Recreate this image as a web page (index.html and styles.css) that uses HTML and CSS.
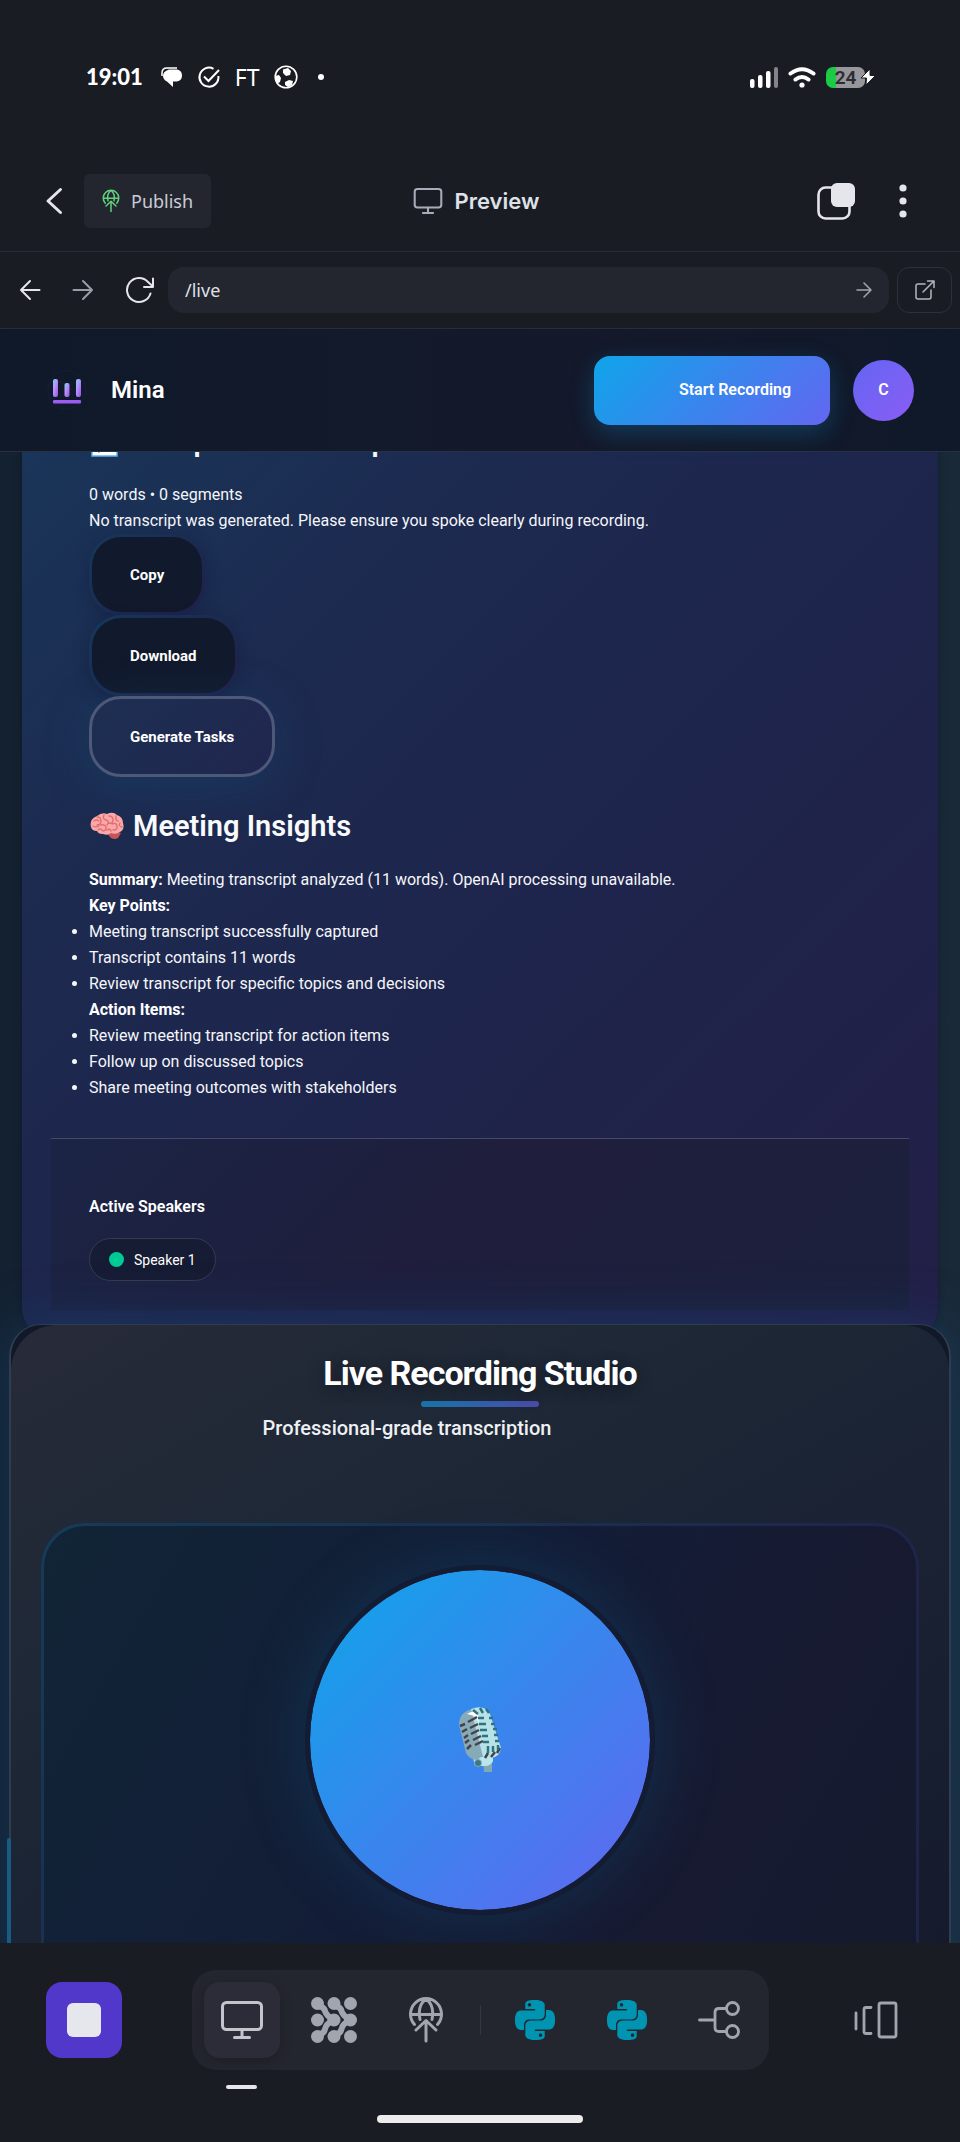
FILE: index.html
```html
<!DOCTYPE html>
<html lang="en">
<head>
<meta charset="utf-8">
<meta name="viewport" content="width=device-width, initial-scale=1">
<title>Mina – Preview</title>
<link rel="stylesheet" href="styles.css">
</head>
<body>
<svg class="defs" aria-hidden="true">
  <defs>
    <symbol id="python" viewBox="0 0 24 24"><path fill="currentColor" d="M14.25.18l.9.2.73.26.59.3.45.32.34.34.25.34.16.33.1.3.04.26.02.2-.01.13V8.5l-.05.63-.13.55-.21.46-.26.38-.3.31-.33.25-.35.19-.35.14-.33.1-.3.07-.26.04-.21.02H8.77l-.69.05-.59.14-.5.22-.41.27-.33.32-.27.35-.2.36-.15.37-.1.35-.07.32-.04.27-.02.21v3.06H3.17l-.21-.03-.28-.07-.32-.12-.35-.18-.36-.26-.36-.36-.35-.46-.32-.59-.28-.73-.21-.88-.14-1.05-.05-1.23.06-1.22.16-1.04.24-.87.32-.71.36-.57.4-.44.42-.33.42-.24.4-.16.36-.1.32-.05.24-.01h.16l.06.01h8.16v-.83H6.18l-.01-2.75-.02-.37.05-.34.11-.31.17-.28.25-.26.31-.23.38-.2.44-.18.51-.15.58-.12.64-.1.71-.06.77-.04.84-.02 1.27.05zm-6.3 1.98l-.23.33-.08.41.08.41.23.34.33.22.41.09.41-.09.33-.22.23-.34.08-.41-.08-.41-.23-.33-.33-.22-.41-.09-.41.09zm13.09 3.95l.28.06.32.12.35.18.36.27.36.35.35.47.32.59.28.73.21.88.14 1.04.05 1.23-.06 1.23-.16 1.04-.24.86-.32.71-.36.57-.4.45-.42.33-.42.24-.4.16-.36.09-.32.05-.24.02-.16-.01h-8.22v.82h5.84l.01 2.76.02.36-.05.34-.11.31-.17.29-.25.25-.31.24-.38.2-.44.17-.51.15-.58.13-.64.09-.71.07-.77.04-.84.01-1.27-.04-1.07-.14-.9-.2-.73-.25-.59-.3-.45-.33-.34-.34-.25-.34-.16-.33-.1-.3-.04-.25-.02-.2.01-.13v-5.34l.05-.64.13-.54.21-.46.26-.38.3-.32.33-.24.35-.2.35-.14.33-.1.3-.06.26-.04.21-.02.13-.01h5.84l.69-.05.59-.14.5-.21.41-.28.33-.32.27-.35.2-.36.15-.36.1-.35.07-.32.04-.28.02-.21V6.07h2.09l.14.01zm-6.47 14.25l-.23.33-.08.41.08.41.23.33.33.23.41.08.41-.08.33-.23.23-.33.08-.41-.08-.41-.23-.33-.33-.23-.41-.08-.41.08z"/></symbol>
    <symbol id="monitor" viewBox="0 0 44 40"><g fill="none" stroke="currentColor" stroke-width="3" stroke-linecap="round"><rect x="2.5" y="2.5" width="39" height="27" rx="4"/><path d="M22 30v7M14.500 37.500h15"/></g></symbol>
    <symbol id="globe" viewBox="0 0 36 46"><g fill="none" stroke="currentColor" stroke-width="3" stroke-linecap="round" stroke-linejoin="round"><path d="M6.500 27.500A15.500 15.500 0 1 1 29.500 27.500M2.500 17.500h31M12 22.500C10 13 12.500 6 18 2c5.500 4 8 11 6 20.500M18 44V23.500M8 33l10-9.500L28 33"/></g></symbol>
    <linearGradient id="bar" x1="0" y1="0" x2="1" y2="1"><stop offset="0" stop-color="#67d8fa"/><stop offset=".4" stop-color="#b794f9"/><stop offset="1" stop-color="#9d4ff0"/></linearGradient>
  </defs>
</svg>

<div class="status">
  <div class="status-group">
    <span class="clock">19:01</span>
    <svg width="22" height="22" viewBox="0 0 22 22"><path d="M1 10V7Q1 2 6 2h10" fill="none" stroke="#fff" stroke-width="1.500"/><path fill="#fff" d="M8 3.500h8q5 1 5 6t-5 6h-4v5.500l-6-5.500q-4-2-4-6t6-6z"/></svg>
    <svg width="24" height="24" viewBox="0 0 24 24" fill="none" stroke="#fff" stroke-width="2"><path d="M16.500 3.800A9.500 9.500 0 1 0 21.400 11M7 11.500l4.500 4.500L22 5"/></svg>
    <span class="ft">FT</span>
    <svg width="24" height="24" viewBox="0 0 24 24"><circle cx="12" cy="12" r="10.800" fill="none" stroke="#fff" stroke-width="1.600"/><path fill="#fff" d="M9 4.500l5-1.500 3 3-1 4-4 1-3-3zM1 11l4-1 2 3-1 4-3 2zM11 17l4-2 4 1-1 4-4 2-3-2z"/></svg>
    <span class="dot"></span>
  </div>
  <div class="status-group status-right">
    <svg width="28" height="21" viewBox="0 0 28 21" fill="#fff"><rect y="12" width="4.500" height="9" rx="2"/><rect x="8" y="8" width="4.500" height="13" rx="2"/><rect x="16" y="4" width="4.500" height="17" rx="2"/><rect x="24" y="0" width="4" height="21" rx="2" fill="#83848a"/></svg>
    <svg width="28" height="21" viewBox="0 0 28 21" fill="none" stroke="#fff" stroke-width="4" stroke-linecap="round"><path d="M2.500 6.500Q14-2 25.500 6.500M7.500 12.500q6.500-5 13 0"/><circle cx="14" cy="18" r="2.600" fill="#fff" stroke="none"/></svg>
    <span class="battery"><b>24</b></span>
    <svg class="bolt" width="15" height="16" viewBox="0 0 15 16"><path fill="#fff" stroke="#1a1c24" stroke-width="1" d="M9 0L0 9h5.500L5 16l9.500-9.500H9z"/></svg>
  </div>
</div>

<header class="toolbar">
  <div class="tool-side">
    <button class="plain" aria-label="Back"><svg width="18" height="28" viewBox="0 0 18 28" fill="none" stroke="#e4e6ec" stroke-width="3" stroke-linecap="round" stroke-linejoin="round"><path d="M15.500 2.500L3 14l12.500 11.500"/></svg></button>
    <button class="publish"><svg width="18" height="24"><use href="#globe"/></svg>Publish</button>
  </div>
  <h1 class="tool-title"><svg width="30" height="28"><use href="#monitor"/></svg>Preview</h1>
  <div class="tool-side tool-right">
    <button class="plain" aria-label="Tabs"><svg width="40" height="40" viewBox="0 0 40 40"><rect x="2.500" y="6.500" width="31" height="31" rx="7" fill="none" stroke="#e4e6ec" stroke-width="2.600"/><rect x="15" y="2" width="24" height="24" rx="6" fill="#e4e6ec"/></svg></button>
    <button class="plain" aria-label="More"><svg width="8" height="34" viewBox="0 0 8 34" fill="#e4e6ec"><circle cx="4" cy="4" r="3.600"/><circle cx="4" cy="17" r="3.600"/><circle cx="4" cy="30" r="3.600"/></svg></button>
  </div>
</header>

<nav class="address" aria-label="Browser">
  <button class="plain" aria-label="Previous page"><svg width="22" height="22" viewBox="0 0 22 22" fill="none" stroke="#e4e6ec" stroke-width="2" stroke-linecap="round" stroke-linejoin="round"><path d="M20.500 11H2M11 2l-9 9 9 9"/></svg></button>
  <button class="plain" aria-label="Next page"><svg width="22" height="22" viewBox="0 0 22 22" fill="none" stroke="#9a9da8" stroke-width="2" stroke-linecap="round" stroke-linejoin="round"><path d="M1.500 11H20M11 2l9 9-9 9"/></svg></button>
  <button class="plain" aria-label="Reload"><svg width="30" height="28" viewBox="0 0 30 28" fill="none" stroke="#e4e6ec" stroke-width="2" stroke-linecap="round" stroke-linejoin="round"><path d="M25.500 17.500A12 12 0 1 1 23 6l5 4.500M28 2.500v8.500h-9"/></svg></button>
  <div class="url"><input type="text" value="/live" aria-label="Path"><button class="plain" aria-label="Go"><svg width="16" height="16" viewBox="0 0 16 16" fill="none" stroke="#a2a5af" stroke-width="1.500" stroke-linecap="round" stroke-linejoin="round"><path d="M1 8h14M8 1l7 7-7 7"/></svg></button></div>
  <button class="external" aria-label="Open in new tab"><svg width="20" height="20" viewBox="0 0 20 20" fill="none" stroke="#b3b6c0" stroke-width="1.500" stroke-linecap="round" stroke-linejoin="round"><path d="M10 4H3Q1 4 1 6v11q0 2 2 2h11q2 0 2-2v-7M8 12L19 1M12.500 1H19v6.500"/></svg></button>
</nav>

<div class="app">
  <header class="app-header">
    <svg class="logo" width="42" height="42" viewBox="0 0 42 42"><g fill="none" stroke="#171e38"><circle cx="21" cy="21" r="19"/><path d="M0 17q10-10 21 0t21 8"/></g><g fill="url(#bar)"><rect x="7" y="10" width="5" height="18" rx="2"/><rect x="18.500" y="14" width="5" height="14" rx="2"/><rect x="30" y="10" width="5" height="18" rx="2"/></g><rect x="7" y="31" width="28" height="3.500" rx="1" fill="#9a5cf3"/></svg>
    <span class="brand">Mina</span>
    <button class="start">Start Recording</button>
    <button class="avatar" aria-label="Account">C</button>
  </header>

  <main class="content">
    <section class="results">
      <div class="report">
        <h2><svg width="36" height="32" viewBox="0 0 36 32"><rect x="3" y="1" width="25" height="30" fill="#fff" stroke="#5db4ee" stroke-width="1.500"/><path d="M9 27l8-3" stroke="#555" stroke-width="1.500"/></svg>Complete Transcript</h2>
        <p>0 words • 0 segments</p>
        <p>No transcript was generated. Please ensure you spoke clearly during recording.</p>
        <div class="actions">
          <button class="action">Copy</button>
          <button class="action">Download</button>
          <button class="action primary">Generate Tasks</button>
        </div>
        <h2><svg width="36" height="28" viewBox="0 0 36 28" role="img" aria-label="Brain"><path fill="#c95455" d="M17 20l8-1 7 2-3 5q-3 2-7 0z"/><path fill="#f9a9a9" d="M2 15Q0 7 8 4q5-4 10-2 6-3 10 1 6 2 6 8 2 7-3 9-4 3-9 1-3 3-8 1-5 0-6-3-5 0-6-4z"/><path fill="none" stroke="#e46d72" stroke-width="1.400" stroke-linecap="round" d="M5 9q3-2 5 0M8 5q4 0 4 4t-4 4M4 14q3 2 6 0M15 3q-2 4 2 5t1 5M12 13q4-1 5 2t-3 4M20 4q4 0 4 4t-4 3M27 4q-1 4 2 5M23 12q4-2 5 2t-4 4M31 11q-2 3 2 4M9 18q2-2 4 0M18 18q3-2 4 1"/></svg>Meeting Insights</h2>
        <p><strong>Summary:</strong> Meeting transcript analyzed (11 words). OpenAI processing unavailable.</p>
        <p><strong>Key Points:</strong></p>
        <ul>
          <li>Meeting transcript successfully captured</li>
          <li>Transcript contains 11 words</li>
          <li>Review transcript for specific topics and decisions</li>
        </ul>
        <p><strong>Action Items:</strong></p>
        <ul>
          <li>Review meeting transcript for action items</li>
          <li>Follow up on discussed topics</li>
          <li>Share meeting outcomes with stakeholders</li>
        </ul>
      </div>
      <div class="speakers">
        <h3>Active Speakers</h3>
        <span class="chip"><i></i>Speaker 1</span>
      </div>
    </section>

    <section class="studio">
      <div class="studio-body">
        <h2 class="studio-title">Live Recording Studio</h2>
        <p class="studio-sub">Professional-grade transcription</p>
        <div class="recorder">
          <button class="mic" aria-label="Record">
            <svg width="44" height="66" viewBox="0 0 44 66"><path fill="#82a7b5" d="M25 56h9v9h-8z"/><path fill="#b9e6ea" d="M15 51l20-3v6q-2 5-8 5H17z"/><path fill="#87aab9" d="M1 18Q1 5 14 2L25 5l2 42-8 6q-7 0-11-7z"/><path fill="#b7e2e8" d="M13 2q14-5 19 5l11 34q-1 9-10 10l-8-1z"/><path fill="#fff" d="M9 7q8-5 11 1l1 8-4-7z"/><circle cx="20" cy="56" r="3.500" fill="#3a7884" stroke="#87aab9"/><g fill="none" stroke="#454349" stroke-width="2.500"><path d="M10 15l9-5M12 21l8-4M13 27l8-4M15 33l8-4M17 38l8-4M2 19l5-2M4 25l5-3M6 31l4-3M7 36l4-3M9 42l4-4M27 51l3-5M33 50l4-5M39 46l3-5"/></g><g fill="none" stroke="#2e737d" stroke-width="2.500"><path d="M15 3l5 4M22 1l3 5M28 2l3 4M20 11h6M31 11h4M21 17h7M33 17h4M22 23h7M35 22h4M24 29h6M36 28h4M25 35h6M37 34h4M30 39v7M35 39v6M40 38v5"/></g></svg>
          </button>
        </div>
      </div>
    </section>
    <span class="scroll-mark"></span>
  </main>
</div>

<footer class="dock">
  <nav class="dock-row" aria-label="Tools">
    <button class="stop" aria-label="Stop"></button>
    <div class="tabs">
      <button class="tab active" aria-label="Preview"><svg width="44" height="40"><use href="#monitor"/></svg></button>
      <button class="tab" aria-label="Agent"><svg width="46" height="46" viewBox="0 0 46 46" fill="currentColor"><g><circle cx="6.500" cy="6.500" r="6.500"/><circle cx="23" cy="6.500" r="6.500"/><circle cx="39.500" cy="6.500" r="6.500"/><circle cx="6.500" cy="23" r="6.500"/><circle cx="23" cy="23" r="6.500"/><circle cx="39.500" cy="23" r="6.500"/><circle cx="6.500" cy="39.500" r="6.500"/><circle cx="23" cy="39.500" r="6.500"/><circle cx="39.500" cy="39.500" r="6.500"/></g><path fill="none" stroke="currentColor" stroke-width="6" d="M8 9q5 1 6 5t8 9q-7 4-8 9t-6 5M24.500 9q5 1 6 5t8 9q-7 4-8 9t-6 5"/></svg></button>
      <button class="tab" aria-label="Publish"><svg width="36" height="46"><use href="#globe"/></svg></button>
      <span class="divider"></span>
      <button class="tab py" aria-label="Python file"><svg width="40" height="40"><use href="#python"/></svg></button>
      <button class="tab py" aria-label="Python file"><svg width="40" height="40"><use href="#python"/></svg></button>
      <button class="tab" aria-label="Version control"><svg width="42" height="40" viewBox="0 0 42 40" fill="none" stroke="currentColor" stroke-width="2.800" stroke-linecap="round"><path d="M1.500 20H17M28 8.500h-7q-4 0-4 4v15q0 4 4 4h7"/><circle cx="34.500" cy="8.500" r="6"/><circle cx="34.500" cy="31.500" r="6"/></svg></button>
    </div>
    <button class="tab" aria-label="Switcher"><svg width="44" height="38" viewBox="0 0 44 38" fill="none" stroke="currentColor" stroke-width="2.800" stroke-linecap="round"><path d="M2 12v16M17 6.500h-5q-2 0-2 2v22q0 2 2 2h5"/><rect x="25" y="2" width="17" height="34" rx="2"/></svg></button>
  </nav>
  <div class="home"></div>
</footer>
</body>
</html>
```
FILE: styles.css
```css
* { box-sizing: border-box; }
body {
  margin: 0;
  height: 100vh;
  display: flex;
  flex-direction: column;
  background: #1a1c24;
  color: #fff;
  font-family: Roboto, "Liberation Sans", sans-serif;
  font-size: 16px;
  line-height: 26px;
}
h1, h2, h3, p, ul { margin: 0; padding: 0; }
button { font: inherit; color: inherit; border: 0; cursor: pointer; }
svg { display: block; flex: none; }
.defs { position: absolute; width: 0; height: 0; }
.plain { background: none; padding: 0; }

/* Phone status bar */
.status {
  display: flex;
  justify-content: space-between;
  align-items: center;
  padding: 64px 86px 0;
  height: 90px;
  flex: none;
}
.status-group { display: flex; align-items: center; gap: 14px; }
.status-right { gap: 10px; }
.clock { margin-right: 4px; font-family: Lato, sans-serif; font-weight: 900; font-size: 22px; }
.ft { font-family: "Noto Sans", sans-serif; font-size: 23px; font-weight: 400; }
.dot { width: 6px; height: 6px; border-radius: 50%; background: #fff; margin-left: 6px; }
.battery {
  width: 39px;
  height: 21px;
  border-radius: 7px;
  background: linear-gradient(90deg, #1ccb45 26%, #97979b 26%);
  color: #2c2c30;
  text-align: center;
  font-size: 19px;
  line-height: 21px;
}
.battery b { font-weight: 600; }
.bolt { margin-left: -14px; }
.status-right { margin-right: -2px; }

/* Workspace toolbar */
.toolbar {
  display: flex;
  align-items: center;
  justify-content: space-between;
  height: 162px;
  padding: 60px 53px 0 45px;
  border-bottom: 1px solid #2a2c37;
  flex: none;
}
.tool-side { display: flex; align-items: center; gap: 21px; flex: 1; }
.tool-right { justify-content: flex-end; gap: 43px; }
.publish {
  display: flex;
  align-items: center;
  gap: 11px;
  height: 54px;
  padding: 0 18px;
  border-radius: 6px;
  background: #24262f;
  color: #c9ccd6;
  font-family: "Noto Sans", sans-serif;
  font-size: 18px;
}
.publish svg { color: #62d17c; }
.tool-title {
  display: flex;
  align-items: center;
  gap: 12px;
  color: #dfe1e8;
  font-family: Inter, sans-serif;
  font-size: 22px;
  font-weight: 600;
}
.tool-title svg { color: #a9acb8; }

/* Address row */
.address {
  display: flex;
  align-items: center;
  height: 77px;
  padding: 0 8px 0 19px;
  border-bottom: 1px solid #2a2c37;
  flex: none;
  gap: 31px;
}
.url {
  display: flex;
  align-items: center;
  flex: 1;
  height: 46px;
  margin-left: -18px;
  padding: 0 17px;
  border-radius: 16px;
  background: #24262f;
}
.url input {
  flex: 1;
  min-width: 0;
  padding: 0;
  border: 0;
  outline: 0;
  background: none;
  color: #dfe1e8;
  font-family: "Noto Sans", sans-serif;
  font-size: 18px;
}
.external {
  display: grid;
  place-items: center;
  width: 55px;
  height: 46px;
  margin-left: -23px;
  border: 1px solid #2d303d;
  border-radius: 12px;
  background: none;
}

/* Previewed app */
.app {
  flex: 1;
  min-height: 0;
  overflow: hidden;
  background: linear-gradient(90deg, #142131 0, #172638 50%, #1a2938 100%);
}
.app-header {
  position: relative;
  z-index: 2;
  display: flex;
  align-items: center;
  height: 123px;
  padding: 0 46px;
  border-bottom: 1px solid #263243;
  background: linear-gradient(90deg, #0f1929, #131a2b 40%, #14182b 70%, #0f1929);
}
.brand { margin-left: 23px; flex: 1; font-size: 24px; font-weight: 600; }
.start {
  height: 69px;
  padding: 0 38px 0 84px;
  min-width: 236px;
  border-radius: 16px;
  background: linear-gradient(135deg, #0ea5e9, #6366f1);
  box-shadow: 0 8px 24px rgba(14, 165, 233, 0.25);
  font-weight: 600;
}
.avatar {
  width: 61px;
  height: 61px;
  margin-left: 23px;
  border-radius: 50%;
  background: linear-gradient(135deg, #6366f1, #8b5cf6);
  font-weight: 600;
}

.content { position: relative; margin-top: -96px; }
.results {
  margin: 0 22px;
  padding: 29px;
  border-radius: 32px;
  background: linear-gradient(135deg, #18375a 0, #1d2a50 30%, #1e244b 60%, #231f47 100%);
  box-shadow: 0 0 6px rgba(10, 18, 32, 0.5);
}
.report { padding: 38px 38px 37px; }
.report h2 {
  display: flex;
  align-items: center;
  gap: 8px;
  margin-bottom: 23px;
  color: #f8fafc;
  font-size: 29px;
  line-height: 36px;
  font-weight: 600;
}
.report .actions + h2 { margin-top: 31px; }
.report p, .report li { color: #f5f6fa; }
.report strong { color: #fff; }
.actions { display: flex; flex-direction: column; align-items: flex-start; }
.action {
  height: 81px;
  padding: 0 38px;
  border: 3px solid transparent;
  border-radius: 32px;
  background:
    linear-gradient(#101a2c, #12192d) padding-box,
    linear-gradient(135deg, #15385a, #221f4a) border-box;
  box-shadow: 0 4px 16px rgba(15, 20, 45, 0.35);
  font-size: 15px;
  font-weight: 700;
}
.action.primary {
  border-color: #4e5878;
  background: linear-gradient(135deg, #1d2f52, #20264f);
  box-shadow: 0 8px 48px rgba(14, 100, 140, 0.26);
}
.speakers {
  padding: 55px 38px 29px;
  border-top: 1px solid #454963;
  background: linear-gradient(135deg, #1b2445, #1f1e3d 45%, #1c203c);
}
.speakers h3 { margin-bottom: 18px; font-size: 16px; font-weight: 600; }
.chip {
  display: inline-flex;
  align-items: center;
  gap: 10px;
  height: 43px;
  padding: 0 19px;
  border: 1px solid #343c50;
  border-radius: 22px;
  background: #161c33;
  font-size: 14px;
  vertical-align: top;
}
.chip i { width: 15px; height: 15px; border-radius: 50%; background: #00cb96; }

.studio {
  position: relative;
  margin: -15px 9px 0;
  border: 2px solid #303d4c;
  border-top-width: 1px;
  border-radius: 32px 32px 0 0;
  background: #11182a;
  box-shadow: 0 0 56px rgba(20, 80, 130, 0.42);
}
.studio-body {
  padding: 28px 30px 0;
  border-radius: 46px 46px 0 0;
  background: linear-gradient(150deg, #272a39 0, #1e2836 30%, #1a2233 60%, #141a2c 100%);
}
.studio-title {
  text-align: center;
  font-size: 34px;
  line-height: 40px;
  font-weight: 700;
  letter-spacing: -1px;
  text-shadow: 0 4px 16px rgba(0, 0, 0, 0.4);
}
.studio-title::after {
  content: "";
  display: block;
  width: 118px;
  height: 6px;
  margin: 8px auto 0;
  border-radius: 3px;
  background: linear-gradient(90deg, #1874a8, #4a4cab);
}
.studio-sub {
  margin: 8px 146px 82px 0;
  text-align: center;
  color: #eef0f4;
  font-size: 20px;
  font-weight: 500;
}
.recorder {
  display: flex;
  justify-content: center;
  padding: 39px 0 80px;
  border: 3px solid transparent;
  border-radius: 44px 44px 0 0;
  background:
    linear-gradient(120deg, #112536 0, #131d37 45%, #171a31 75%, #141a2e 100%) padding-box,
    linear-gradient(135deg, #163b59, #1f2449 70%) border-box;
}
.mic {
  display: grid;
  place-items: center;
  width: 350px;
  height: 350px;
  padding: 0;
  border: 5px solid #141c34;
  border-radius: 50%;
  background: linear-gradient(135deg, #0ea5e9, #6366f1) padding-box;
  box-shadow: 0 0 64px rgba(14, 110, 160, 0.26);
}
.scroll-mark {
  position: absolute;
  left: 7px;
  bottom: 0;
  width: 4px;
  height: 162px;
  border-radius: 2px;
  background: #195b81;
}

/* Bottom dock */
.dock { flex: none; padding: 27px 46px 19px; color: #a1a5b0; }
.dock-row { display: flex; align-items: center; justify-content: space-between; margin-bottom: 45px; }
.stop {
  display: grid;
  place-items: center;
  width: 76px;
  height: 76px;
  border-radius: 16px;
  background: #5138cb;
}
.stop::after { content: ""; width: 34px; height: 34px; border-radius: 6px; background: #e5e7ed; }
.tabs { display: flex; align-items: center; gap: 16px; padding: 12px; border-radius: 24px; background: #24262f; }
.tab {
  position: relative;
  display: grid;
  place-items: center;
  width: 76px;
  height: 76px;
  padding: 0;
  border-radius: 16px;
  background: none;
}
.tab.active { background: #2b2c38; color: #c2c5cc; box-shadow: 0 3px 12px rgba(0, 0, 0, 0.2); }
.tab.active::after {
  content: "";
  position: absolute;
  bottom: -31px;
  width: 31px;
  height: 4px;
  border-radius: 2px;
  background: #e5e7ed;
}
.tab.py { color: #0094b3; }
.divider { width: 1px; height: 30px; background: #343642; }
.home { width: 206px; height: 8px; margin: 0 auto; border-radius: 4px; background: #ececec; }
```
